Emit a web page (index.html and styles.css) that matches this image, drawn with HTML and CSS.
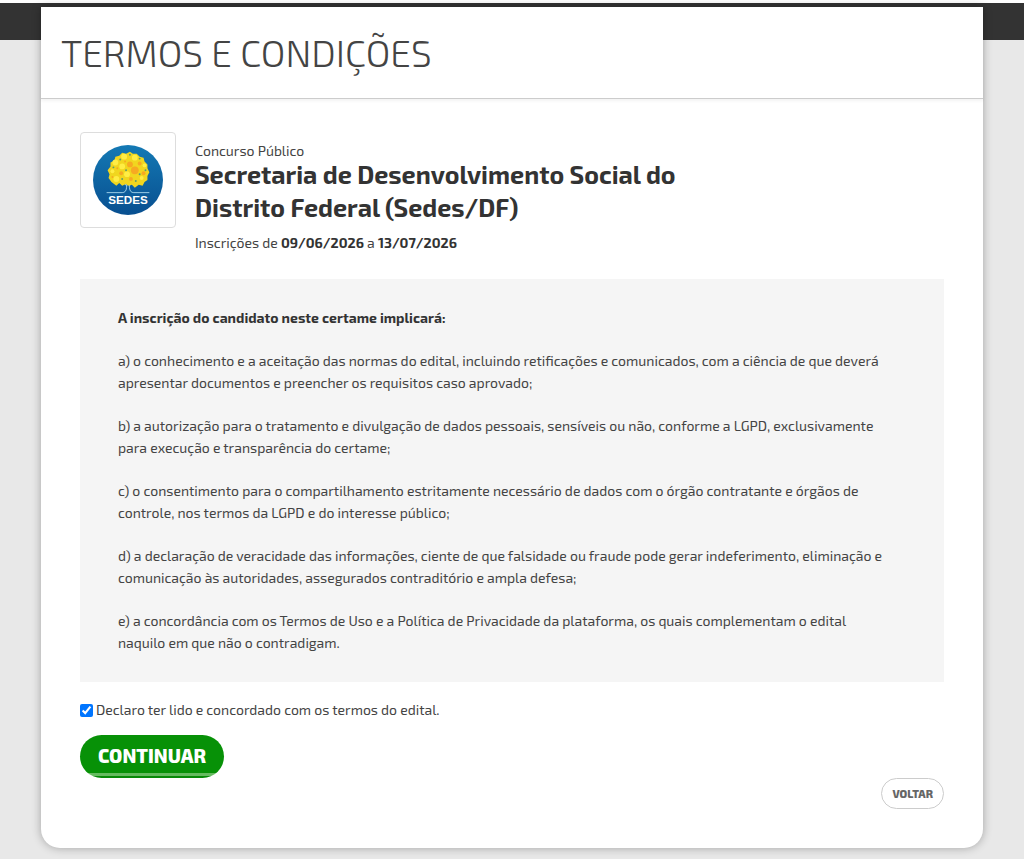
FILE: index.html
```html
<!DOCTYPE html>
<html lang="pt-br">
<head>
    <meta charset="UTF-8">
    <meta name="viewport" content="width=device-width, initial-scale=1.0">
    <title>Termos e Condições</title>
    <link rel="stylesheet" href="styles.css">
</head>
<body>

    <div class="topbar"></div>

    <main class="modal">
        <header class="modal-header">
            <h1>TERMOS E CONDIÇÕES</h1>
        </header>

        <form class="modal-body">
            <section class="concurso">
                <div class="logo">
                    <svg viewBox="0 0 72 72" role="img" aria-label="SEDES">
                        <defs>
                            <linearGradient id="azul" x1="0" y1="0" x2="0" y2="1">
                                <stop offset="0" stop-color="#1479b4"/>
                                <stop offset="1" stop-color="#084f90"/>
                            </linearGradient>
                        </defs>
                        <circle cx="36" cy="36" r="36" fill="url(#azul)"/>
                        <!-- tronco e chão -->
                        <path d="M14 49h16q4 0 4.500-5l.5-6M58 49H42q-4 0-4.500-5l-.5-6M34.500 42l-5-6M37.500 42l5-6" fill="none" stroke="#9fd0e8" stroke-width="1"/>
                        <!-- copa -->
                        <path d="M19 38l-3-4 1-4-2-4 3-4 0-4 4-2 1-4 4-1 3-3 4 1 4-2 3 2 4 0 3 3 4 1 1 4 3 3 0 4 2 4-2 4 0 4-3 2-2 4-4-1-4 3-3-3-4 1-2-2-4 2-3-3-3 3z" fill="#f1d61f"/>
                        <g fill="#ffed45">
                            <circle cx="23" cy="18" r="3"/><circle cx="32" cy="12" r="3"/><circle cx="43" cy="13" r="3"/>
                            <circle cx="20" cy="27" r="2"/><circle cx="30" cy="22" r="3"/><circle cx="53" cy="21" r="2"/>
                            <circle cx="24" cy="35" r="3"/><circle cx="35" cy="30" r="3"/><circle cx="50" cy="34" r="2"/>
                        </g>
                        <g fill="#f7a922">
                            <circle cx="38" cy="20" r="3"/><circle cx="43" cy="26" r="4"/><circle cx="29" cy="29" r="2"/>
                            <circle cx="48" cy="19" r="2"/><circle cx="39" cy="35" r="2"/><circle cx="25" cy="24" r="1"/>
                            <circle cx="52" cy="29" r="2"/><circle cx="33" cy="17" r="1"/><circle cx="20" cy="33" r="1"/>
                        </g>
                        <g fill="#5f9c6b">
                            <circle cx="28" cy="15" r="1"/><circle cx="38" cy="10" r="1"/><circle cx="21" cy="23" r="1"/>
                            <circle cx="34" cy="26" r="1"/><circle cx="48" cy="30" r="1"/><circle cx="30" cy="35" r="1"/>
                            <circle cx="54" cy="26" r="1"/><circle cx="48" cy="14" r="1"/><circle cx="44" cy="37" r="1"/>
                        </g>
                        <text x="36" y="61" text-anchor="middle" class="logo-text">SEDES</text>
                    </svg>
                </div>
                <div class="concurso-info">
                    <p>Concurso Público</p>
                    <h2>Secretaria de Desenvolvimento Social do Distrito Federal (Sedes/DF)</h2>
                    <p>Inscrições de <strong>09/06/2026</strong> a <strong>13/07/2026</strong></p>
                </div>
            </section>

            <section class="termos">
                <p><strong>A inscrição do candidato neste certame implicará:</strong></p>
                <p>a) o conhecimento e a aceitação das normas do edital, incluindo retificações e comunicados, com a ciência de que deverá apresentar documentos e preencher os requisitos caso aprovado;</p>
                <p>b) a autorização para o tratamento e divulgação de dados pessoais, sensíveis ou não, conforme a LGPD, exclusivamente para execução e transparência do certame;</p>
                <p>c) o consentimento para o compartilhamento estritamente necessário de dados com o órgão contratante e órgãos de controle, nos termos da LGPD e do interesse público;</p>
                <p>d) a declaração de veracidade das informações, ciente de que falsidade ou fraude pode gerar indeferimento, eliminação e comunicação às autoridades, assegurados contraditório e ampla defesa;</p>
                <p>e) a concordância com os Termos de Uso e a Política de Privacidade da plataforma, os quais complementam o edital naquilo em que não o contradigam.</p>
            </section>

            <div class="aceite">
                <input type="checkbox" id="aceite" checked>
                <label for="aceite">Declaro ter lido e concordado com os termos do edital.</label>
            </div>

            <button type="submit" class="btn-continuar">CONTINUAR</button>

            <div class="rodape">
                <button type="button" class="btn-voltar">VOLTAR</button>
            </div>
        </form>
    </main>

</body>
</html>
```

FILE: styles.css
```css
* {
    box-sizing: border-box;
}
body {
    margin: 0;
    background-color: #e8e8e8;
    color: #444;
    font-family: "Exo 2", "Noto Sans", sans-serif;
    font-size: 14px;
    line-height: 22px;
}
h1, h2, p {
    margin: 0;
}
.topbar {
    height: 40px;
    background-color: #333;
    border-top: 3px solid #fff;
}
.modal {
    width: 92%;
    margin: -33px auto 11px;
    background-color: #fff;
    border-radius: 0 0 19px 19px;
    box-shadow: 0 0 10px rgba(0, 0, 0, 0.3);
}
.modal-header {
    padding: 21px 20px 22px;
    border-bottom: 1px solid #ccc;
    box-shadow: 0 2px 3px rgba(0, 0, 0, 0.05);
}
.modal-header h1 {
    font-size: 37px;
    font-weight: 300;
    line-height: 48px;
}
.modal-body {
    padding: 33px 39px 39px;
}
.concurso {
    display: flex;
    gap: 19px;
}
.logo {
    flex: none;
    width: 96px;
    height: 96px;
    padding: 12px;
    border: 1px solid #ddd;
    border-radius: 4px;
}
.logo svg {
    display: block;
}
.logo-text {
    fill: #fff;
    font-family: "Liberation Sans", sans-serif;
    font-size: 12px;
    font-weight: bold;
}
.concurso-info {
    max-width: 540px;
    padding-top: 12px;
}
.concurso-info p {
    line-height: 14px;
}
.concurso-info h2 {
    margin-bottom: 12px;
    font-size: 25px;
    font-weight: 700;
    line-height: 33px;
    color: #333;
}
.termos {
    margin-top: 29px;
    padding: 28px 56px 28px 38px;
    background-color: #f5f5f5;
}
.termos p + p {
    margin-top: 21px;
}
strong {
    font-weight: 700;
    color: #333;
}
.aceite {
    display: flex;
    align-items: center;
    gap: 3px;
    margin-top: 17px;
}
.aceite input {
    width: 13px;
    height: 13px;
    margin: 0;
}
button {
    font-family: inherit;
    cursor: pointer;
}
.btn-continuar {
    display: block;
    height: 43px;
    margin-top: 14px;
    padding: 0 18px 2px;
    border: none;
    border-radius: 22px;
    background: linear-gradient(to top, #078a07 2px, #66bb60 2px, #66bb60 5px, #079107 5px);
    color: #fff;
    font-size: 19px;
    font-weight: 800;
}
.rodape {
    display: flex;
    justify-content: flex-end;
}
.btn-voltar {
    height: 31px;
    padding: 0 10px 1px;
    border: 1px solid #ccc;
    border-radius: 16px;
    background-color: #fff;
    color: #666;
    font-size: 11px;
    font-weight: 800;
}
```
